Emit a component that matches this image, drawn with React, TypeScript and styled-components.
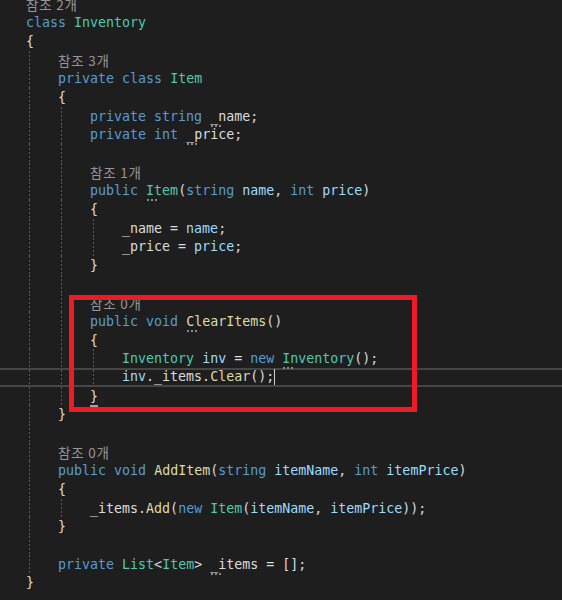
import * as React from 'react';
import styled, { createGlobalStyle, css } from 'styled-components';

const Global = createGlobalStyle`
  html, body {
    margin: 0;
    padding: 0;
    background: #1e1e1e;
  }
`;

const Editor = styled.div`
  position: relative;
  width: 562px;
  height: 600px;
  overflow: hidden;
  background: #1e1e1e;
  font-family: "DejaVu Sans Mono", "Liberation Mono", monospace;
  font-size: 13.3px;
  color: #dcdcdc;
`;

const Lines = styled.div`
  display: flex;
  flex-direction: column;
  margin-top: -5px;
`;

const Row = styled.div<{ $current?: boolean }>`
  display: flex;
  align-items: center;
  height: 18.67px;
  box-sizing: border-box;
  padding-left: 26px;
  ${(p) =>
    p.$current &&
    css`
      border-top: 2px solid #464646;
      border-bottom: 2px solid #464646;
    `}
`;

const Indent = styled.span<{ $guide: boolean }>`
  flex: none;
  width: 4ch;
  align-self: stretch;
  ${(p) =>
    p.$guide &&
    css`
      background-image: repeating-linear-gradient(to bottom, #5a5a5a 0 2px, transparent 2px 4px);
      background-size: 1px 100%;
      background-position: 3px 0;
      background-repeat: no-repeat;
    `}
`;

const Code = styled.span`
  white-space: pre;
`;

const Lens = styled.span`
  font-family: "Noto Sans CJK KR", sans-serif;
  font-size: 13.5px;
  letter-spacing: 0.8px;
  color: #969696;
`;

const K = styled.span`color: #569cd6;`;
const T = styled.span`color: #4ec9b0;`;
const M = styled.span`color: #dcdcaa;`;
const V = styled.span`color: #9cdcfe;`;

const Hint = styled.span`
  position: relative;
  &::after {
    content: '';
    position: absolute;
    left: 1px;
    bottom: -3px;
    width: 10px;
    height: 2px;
    background: repeating-linear-gradient(to right, #8a8a8a 0 2px, transparent 2px 4px);
  }
`;

const Brace = styled.span`
  position: relative;
  &::after {
    content: '';
    position: absolute;
    left: 0;
    right: 0;
    bottom: -3px;
    height: 2px;
    background: #9aa6ae;
  }
`;

const Caret = styled.span`
  display: inline-block;
  width: 1px;
  height: 16px;
  vertical-align: middle;
  background: #cfcfcf;
`;

const Highlight = styled.div`
  position: absolute;
  left: 69px;
  top: 295px;
  width: 348px;
  height: 117px;
  box-sizing: border-box;
  border: 5px solid #ed1c24;
`;

type LineProps = { indent?: number; guides?: number; current?: boolean; children?: React.ReactNode };

function Line({ indent = 0, guides = 0, current, children }: LineProps) {
  const cells = Math.max(indent, guides);
  return (
    <Row $current={current}>
      {Array.from({ length: cells }).map((_, i) => (
        <Indent key={i} $guide={i < guides} />
      ))}
      {children !== undefined && <Code>{children}</Code>}
    </Row>
  );
}

export default function App() {
  return (
    <Editor>
      <Global />
      <Lines>
        <Line><Lens>참조 2개</Lens></Line>
        <Line><K>class</K> <T>Inventory</T></Line>
        <Line>{'{'}</Line>
        <Line guides={1}><Lens>참조 3개</Lens></Line>
        <Line guides={1}><K>private</K> <K>class</K> <T>Item</T></Line>
        <Line guides={1}>{'{'}</Line>
        <Line guides={2}><K>private</K> <K>string</K> <Hint>_name</Hint>;</Line>
        <Line guides={2}><K>private</K> <K>int</K> <Hint>_price</Hint>;</Line>
        <Line guides={2} />
        <Line guides={2}><Lens>참조 1개</Lens></Line>
        <Line guides={2}>
          <K>public</K> <Hint><T>Item</T></Hint>(<K>string</K> <V>name</V>, <K>int</K> <V>price</V>)
        </Line>
        <Line guides={2}>{'{'}</Line>
        <Line guides={3}>_name = <V>name</V>;</Line>
        <Line guides={3}>_price = <V>price</V>;</Line>
        <Line guides={2}>{'}'}</Line>
        <Line guides={2} />
        <Line guides={2}><Lens>참조 0개</Lens></Line>
        <Line guides={2}><K>public</K> <K>void</K> <Hint><M>ClearItems</M></Hint>()</Line>
        <Line guides={2}>{'{'}</Line>
        <Line guides={3}>
          <T>Inventory</T> <V>inv</V> = <K>new</K> <Hint><T>Inventory</T></Hint>();
        </Line>
        <Line guides={3} current>
          <V>inv</V>._items.<M>Clear</M>();<Caret />
        </Line>
        <Line guides={2}><Brace>{'}'}</Brace></Line>
        <Line guides={1}>{'}'}</Line>
        <Line guides={1} />
        <Line guides={1}><Lens>참조 0개</Lens></Line>
        <Line guides={1}>
          <K>public</K> <K>void</K> <M>AddItem</M>(<K>string</K> <V>itemName</V>, <K>int</K> <V>itemPrice</V>)
        </Line>
        <Line guides={1}>{'{'}</Line>
        <Line guides={2}>
          _items.<M>Add</M>(<K>new</K> <T>Item</T>(<V>itemName</V>, <V>itemPrice</V>));
        </Line>
        <Line guides={1}>{'}'}</Line>
        <Line guides={1} />
        <Line guides={1}>
          <K>private</K> <T>List</T>&lt;<T>Item</T>&gt; <Hint>_items</Hint> = [];
        </Line>
        <Line>{'}'}</Line>
      </Lines>
      <Highlight />
    </Editor>
  );
}
